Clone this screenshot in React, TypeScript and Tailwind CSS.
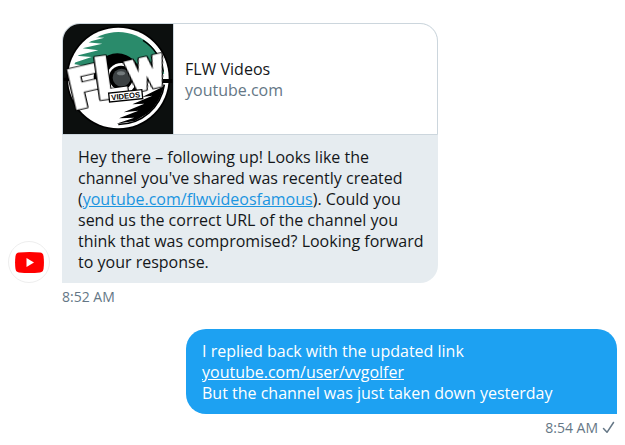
import * as React from "react";

const letterClass =
    "[filter:drop-shadow(2px_0_0_#000)_drop-shadow(-2px_0_0_#000)_drop-shadow(0_2px_0_#000)_drop-shadow(0_-2px_0_#000)]";

function ChannelArtwork() {
    return (
        <svg viewBox="24 27 330 330" className="h-[110px] w-[110px] shrink-0" aria-label="FLW Videos">
            <defs>
                <clipPath id="disc">
                    <circle cx="190" cy="189" r="138" />
                </clipPath>
            </defs>
            <rect x="24" y="27" width="330" height="330" fill="#0c0f0e" />
            <circle cx="190" cy="189" r="156" fill="#000" />
            <circle cx="190" cy="189" r="151" fill="#fff" />
            <g clipPath="url(#disc)">
                <path
                    d="M150 48 L110 66 L148 68 L96 82 L142 86 L82 100 L130 106 L64 122 L110 126 L50 146 L130 160 L345 178 L345 30 L170 30Z"
                    fill="#2a8b6b"
                />
                <path
                    d="M345 205 L262 246 L292 242 L232 268 L268 266 L206 292 L250 287 L192 310 L238 308 L184 326 L240 318 L290 288 L322 240Z"
                    fill="#000"
                />
            </g>
            <path d="M328 209 A139 139 0 0 1 190 328" fill="none" stroke="#000" strokeWidth="5" />
            <path d="M272 70 A144 144 0 0 1 333 172" fill="none" stroke="#fff" strokeWidth="9" />
            <path d="M264 76 A136 136 0 0 1 325 170" fill="none" stroke="#000" strokeWidth="4" />
            <path d="M26 188 H66 V198 H26Z M310 192 H352 V204 H310Z" fill="#000" />
            <circle cx="187" cy="186" r="71" fill="#000" />
            <circle cx="200" cy="190" r="46" fill="#fff" />
            <circle cx="198" cy="188" r="36" fill="#000" />
            <circle cx="200" cy="188" r="27" fill="#3c4143" />
            <ellipse cx="198" cy="175" rx="12" ry="6" fill="#737a7c" />
            <g className="font-['Roboto',sans-serif] font-bold" fill="#fff" stroke="#fff" strokeWidth="10">
                <text x="44" y="272" fontSize="160" transform="rotate(-13 85 215)" className={letterClass}>
                    F
                </text>
                <text x="122" y="246" fontSize="164" transform="rotate(-8 160 190)" className={letterClass}>
                    L
                </text>
                <text x="218" y="220" fontSize="124" transform="rotate(-13 270 170)" className={letterClass}>
                    W
                </text>
            </g>
            <g transform="rotate(-6 212 242)">
                <rect x="162" y="229" width="100" height="27" fill="#fff" stroke="#000" strokeWidth="4" />
                <text
                    x="212"
                    y="251"
                    textAnchor="middle"
                    fontSize="23"
                    className="font-['Liberation_Sans',sans-serif] font-bold"
                >
                    VIDEOS
                </text>
            </g>
        </svg>
    );
}

function YoutubeAvatar() {
    return (
        <div className="flex h-[42px] w-[42px] shrink-0 items-center justify-center rounded-full border border-[#eeeeee] bg-white">
            <svg viewBox="0 0 29 21" className="h-[21px] w-[29px]" aria-label="YouTube">
                <path
                    d="M4 .6 Q14.5 -.4 25 .6 Q28 .9 28.5 4 Q29.4 10.5 28.5 17 Q28 20.1 25 20.4 Q14.5 21.4 4 20.4 Q1 20.1 .5 17 Q-.4 10.5 .5 4 Q1 .9 4 .6Z"
                    fill="#ff0000"
                />
                <path d="M11.5 6 L19 10.5 L11.5 15Z" fill="#fff" />
            </svg>
        </div>
    );
}

function LinkCard() {
    return (
        <div className="flex items-center overflow-hidden rounded-t-[18px] border border-[#ccd6dd] bg-white">
            <ChannelArtwork />
            <div className="flex flex-col justify-center self-stretch border-l border-[#ccd6dd] px-[11px] pt-[2px]">
                <p className="text-[#14171a]">FLW Videos</p>
                <p className="text-[#657786]">youtube.com</p>
            </div>
        </div>
    );
}

export default function App() {
    return (
        <main className="min-h-screen bg-white px-2 pt-[23px] font-['Open_Sans','Noto_Sans',sans-serif] text-[16px] leading-[21px]">
            <div className="flex items-end gap-3">
                <YoutubeAvatar />
                <div className="w-full max-w-[376px] rounded-[18px] rounded-bl-none bg-[#e6ecf0]">
                    <LinkCard />
                    <p className="pt-3 pr-2 pb-[10px] pl-4 text-[#14171a]">
                        Hey there – following up! Looks like the
                        <br />
                        channel you&apos;ve shared was recently created
                        <br />(
                        <a href="#" className="text-[#1b95e0] underline">
                            youtube.com/flwvideosfamous
                        </a>
                        ). Could you
                        <br />
                        send us the correct URL of the channel you
                        <br />
                        think that was compromised? Looking forward
                        <br />
                        to your response.
                    </p>
                </div>
            </div>
            <div className="pt-[3px] pl-[54px] text-[14px] leading-[21px] text-[#657786]">8:52 AM</div>

            <div className="mt-[22px] flex flex-col items-end">
                <div className="w-full max-w-[431px] rounded-[20px] rounded-br-none bg-[#1da1f2] px-4 pt-3 pb-[10px] text-white">
                    <p>I replied back with the updated link</p>
                    <a href="#" className="underline">
                        youtube.com/user/vvgolfer
                    </a>
                    <p>But the channel was just taken down yesterday</p>
                </div>
                <div className="flex items-center gap-1 pt-[3px] pr-[2px] text-[14px] leading-[21px] text-[#657786]">
                    8:54 AM
                    <svg viewBox="0 0 13 13" className="h-[13px] w-[13px]" aria-label="Sent">
                        <path
                            d="M1.5 7.5 L5 11.3 L11.5 1.5"
                            fill="none"
                            stroke="currentColor"
                            strokeWidth="1.5"
                            strokeLinecap="round"
                            strokeLinejoin="round"
                        />
                    </svg>
                </div>
            </div>
        </main>
    );
}
